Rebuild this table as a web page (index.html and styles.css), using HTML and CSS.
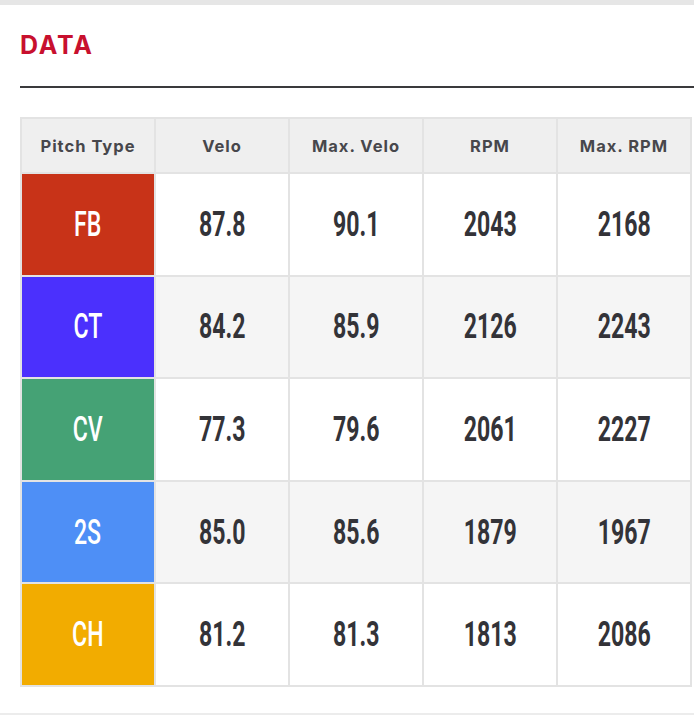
FILE: index.html
```html
<!DOCTYPE html>
<html>
<head>
<meta charset="utf-8">
<link rel="stylesheet" href="styles.css">
</head>
<body>
<div class="topbar"></div>
<section class="panel">
  <h2 class="title">DATA</h2>
  <div class="rule"></div>
  <table class="data">
    <thead>
      <tr>
        <th>Pitch Type</th>
        <th>Velo</th>
        <th>Max. Velo</th>
        <th>RPM</th>
        <th>Max. RPM</th>
      </tr>
    </thead>
    <tbody>
      <tr>
        <td class="pitch fb"><span>FB</span></td>
        <td><span>87.8</span></td>
        <td><span>90.1</span></td>
        <td><span>2043</span></td>
        <td><span>2168</span></td>
      </tr>
      <tr>
        <td class="pitch ct"><span>CT</span></td>
        <td><span>84.2</span></td>
        <td><span>85.9</span></td>
        <td><span>2126</span></td>
        <td><span>2243</span></td>
      </tr>
      <tr>
        <td class="pitch cv"><span>CV</span></td>
        <td><span>77.3</span></td>
        <td><span>79.6</span></td>
        <td><span>2061</span></td>
        <td><span>2227</span></td>
      </tr>
      <tr>
        <td class="pitch ts"><span>2S</span></td>
        <td><span>85.0</span></td>
        <td><span>85.6</span></td>
        <td><span>1879</span></td>
        <td><span>1967</span></td>
      </tr>
      <tr>
        <td class="pitch ch"><span>CH</span></td>
        <td><span>81.2</span></td>
        <td><span>81.3</span></td>
        <td><span>1813</span></td>
        <td><span>2086</span></td>
      </tr>
    </tbody>
  </table>
</section>
<div class="bottombar"></div>
</body>
</html>
```
FILE: styles.css
```css
html, body {
  margin: 0;
  padding: 0;
  background: #ffffff;
}
body {
  width: 694px;
  height: 715px;
  overflow: hidden;
  font-family: Inter, "Open Sans", sans-serif;
  position: relative;
}
.topbar {
  height: 5px;
  background: #e6e6e6;
}
.panel {
  padding-left: 20px;
}
.title {
  margin: 0;
  padding-top: 27px;
  padding-bottom: 28px;
  height: 26px;
  font-family: Inter, "Open Sans", sans-serif;
  font-weight: 700;
  font-size: 25px;
  line-height: 26px;
  color: #c8102e;
  letter-spacing: 1.8px;
}
.rule {
  height: 2px;
  background: #3a3a3c;
}
.data {
  margin-top: 29px;
  width: 672px;
  border-collapse: collapse;
  table-layout: fixed;
}
.data th,
.data td {
  border: 2px solid #e3e3e3;
  text-align: center;
  padding: 0;
}
.data th {
  height: 53px;
  background: #efefef;
  font-family: Inter, "Open Sans", sans-serif;
  font-weight: 700;
  font-size: 16.5px;
  letter-spacing: 1px;
  color: #47474c;
}
.data td {
  height: 100.6px;
  font-family: Roboto, "DejaVu Sans", sans-serif;
  font-weight: 700;
  font-size: 35px;
  color: #333338;
}
.data td span {
  display: inline-block;
  transform: scaleX(0.66);
}
.data tbody tr:nth-child(even) td {
  background: #f5f5f5;
}
.data tbody tr td.pitch {
  color: #ffffff;
  font-weight: 500;
}
.data tbody tr td.fb { background: #c83318; }
.data tbody tr td.ct { background: #4b30fd; }
.data tbody tr td.cv { background: #45a275; }
.data tbody tr td.ts { background: #4e8ff6; }
.data tbody tr td.ch { background: #f2ac00; }
.bottombar {
  position: absolute;
  left: 0;
  right: 0;
  bottom: 0;
  height: 2px;
  background: #ececec;
}
```
